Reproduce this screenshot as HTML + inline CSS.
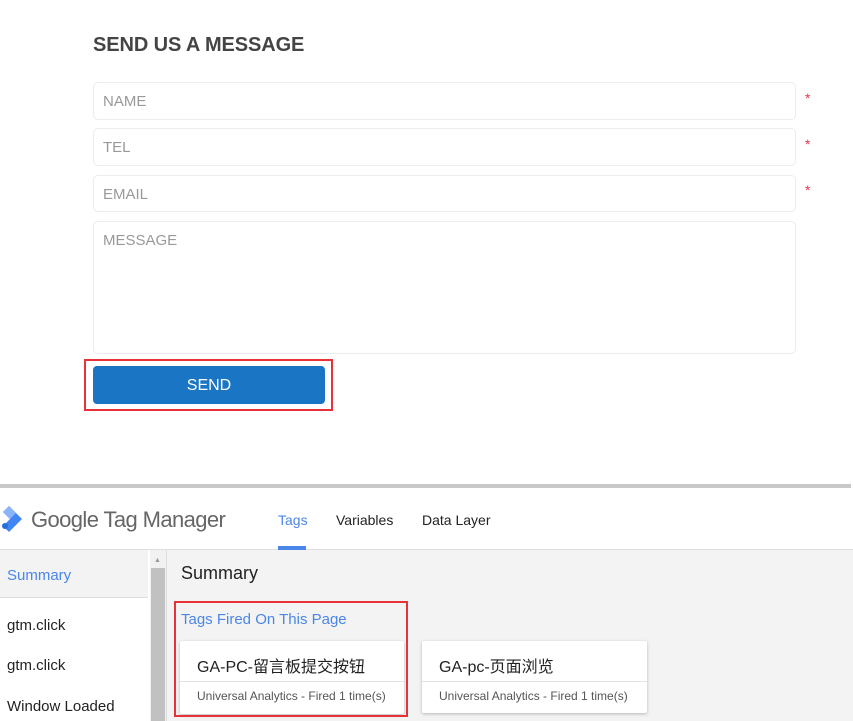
<!DOCTYPE html>
<html><head><meta charset="utf-8"><style>
*{margin:0;padding:0;box-sizing:border-box}
body{width:853px;height:721px;background:#fff;position:relative;overflow:hidden;font-family:"Liberation Sans","Noto Sans CJK SC",sans-serif}
.a{position:absolute}
.h{left:93px;top:34px;font-size:20px;font-weight:bold;color:#444;letter-spacing:-0.1px}
.f{left:93px;width:703px;border:1px solid #ececec;border-radius:5px;background:#fff;color:#999;font-size:15px;padding:10px 9px}
.st{left:805px;color:#e53950;font-size:14px}
.rb{border:2px solid #e8323a}
.btn{left:93px;top:366px;width:232px;height:38px;background:#1a76c4;border-radius:4px;color:#fff;font-size:16px;text-align:center;line-height:40px}
.side{font-size:15px;color:#222;left:7px}
.card{background:#fff;box-shadow:0 1px 3px rgba(0,0,0,.25);border-radius:2px}
.card .t{font-size:16px;color:#222;padding:12px 0 0 17px;height:41px;border-bottom:1px solid #e3e3e3}
.card .s{font-size:12px;color:#555;padding:7px 0 0 17px}
</style></head><body>
<div class="a h">SEND US A MESSAGE</div>
<div class="a f" style="top:82px;height:38px">NAME</div><div class="a st" style="top:90px">*</div>
<div class="a f" style="top:128px;height:38px">TEL</div><div class="a st" style="top:136px">*</div>
<div class="a f" style="top:175px;height:37px">EMAIL</div><div class="a st" style="top:182px">*</div>
<div class="a f" style="top:221px;height:133px">MESSAGE</div>
<div class="a rb" style="left:84px;top:359px;width:249px;height:52px"></div>
<div class="a btn">SEND</div>

<div class="a" style="left:0;top:484px;width:851px;height:4px;background:#c8c8c8"></div>
<div class="a" style="left:0;top:549px;width:853px;height:1px;background:#ddd"></div>
<svg class="a" style="left:0;top:504px" width="24" height="30" viewBox="0 0 24 30">
<path d="M9 2 L22 15 L9 28 L3 22 L10 15 L3 8 Z" fill="#4285f4"/>
<path d="M9 2 L3 8 L10 15 L16 9 Z" fill="#8ab4f8"/>
<circle cx="5" cy="22" r="3" fill="#246fdb"/>
</svg>
<div class="a" style="left:31px;top:507px;font-size:22px;color:#666;letter-spacing:-0.6px">Google Tag Manager</div>
<div class="a" style="left:278px;top:512px;font-size:14px;color:#4a86e8">Tags</div>
<div class="a" style="left:278px;top:546px;width:28px;height:4px;background:#4a86e8"></div>
<div class="a" style="left:336px;top:512px;font-size:14px;color:#222">Variables</div>
<div class="a" style="left:422px;top:512px;font-size:14px;color:#222">Data Layer</div>

<div class="a" style="left:0;top:550px;width:148px;height:48px;background:#f3f3f3;border-bottom:1px solid #ddd"></div>
<div class="a side" style="top:567px;color:#4a86e8">Summary</div>
<div class="a side" style="top:617px">gtm.click</div>
<div class="a side" style="top:657px">gtm.click</div>
<div class="a side" style="top:698px">Window Loaded</div>
<div class="a" style="left:150px;top:550px;width:16px;height:171px;background:#f1f1f1"></div>
<div class="a" style="left:151px;top:568px;width:14px;height:153px;background:#c1c1c1"></div>
<div class="a" style="left:154px;top:557px;font-size:7px;color:#999">▲</div>
<div class="a" style="left:166px;top:550px;width:1px;height:171px;background:#ddd"></div>
<div class="a" style="left:167px;top:550px;width:686px;height:171px;background:#f3f3f3"></div>
<div class="a" style="left:181px;top:563px;font-size:18px;color:#222">Summary</div>
<div class="a" style="left:181px;top:611px;font-size:15px;color:#4a86e8">Tags Fired On This Page</div>
<div class="a card" style="left:180px;top:641px;width:224px;height:73px"><div class="t">GA-PC-留言板提交按钮</div><div class="s">Universal Analytics - Fired 1 time(s)</div></div>
<div class="a card" style="left:422px;top:641px;width:225px;height:72px"><div class="t">GA-pc-页面浏览</div><div class="s">Universal Analytics - Fired 1 time(s)</div></div>
<div class="a rb" style="left:174px;top:601px;width:234px;height:116px"></div>
</body></html>
